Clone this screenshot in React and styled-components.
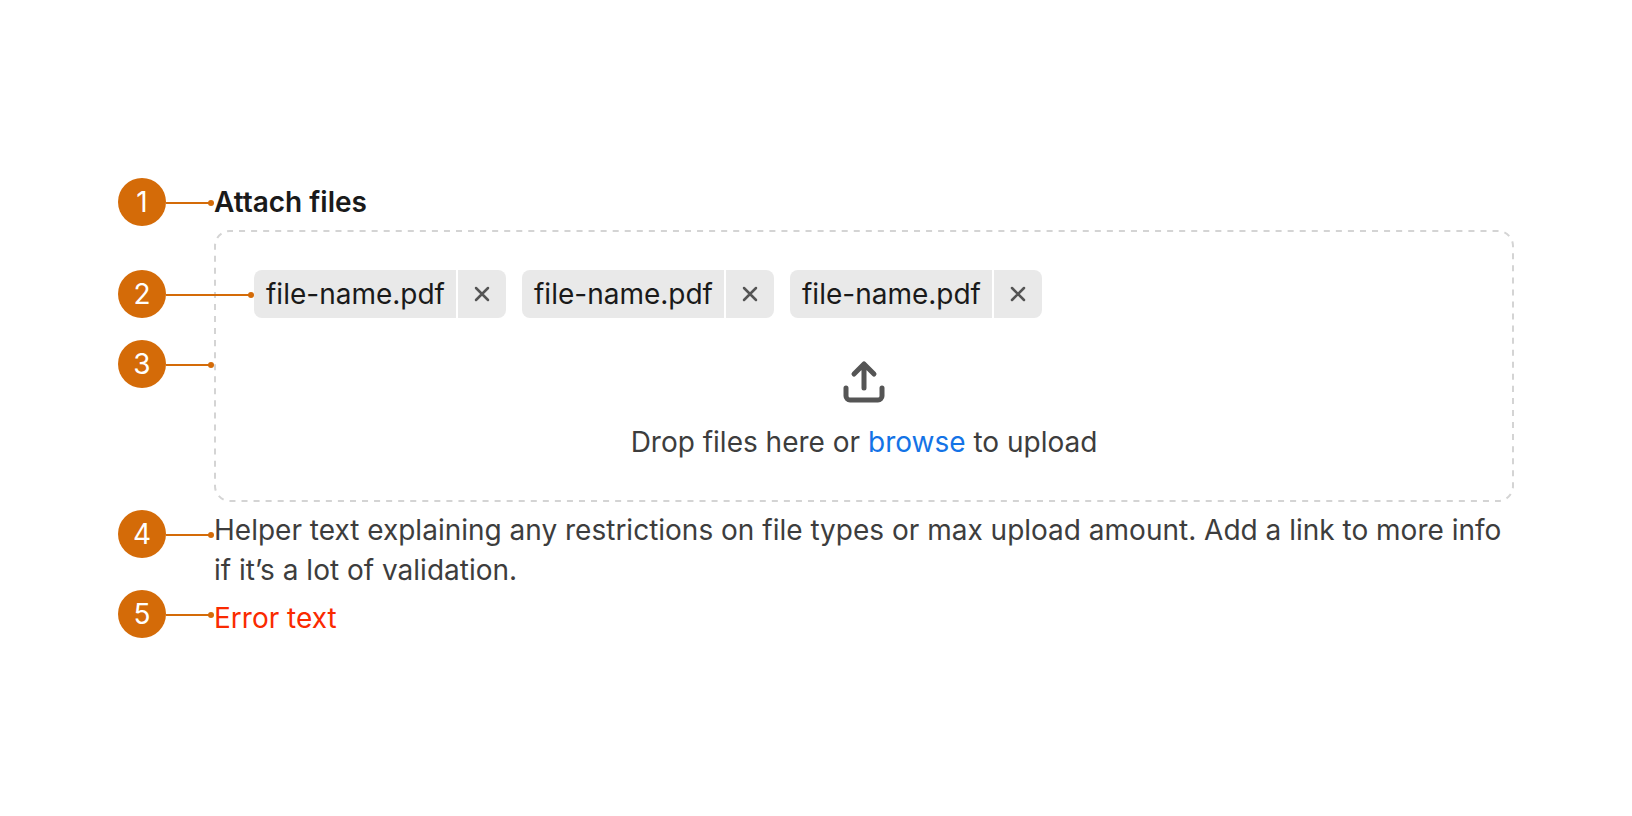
import React, { useRef, useState } from "react";
import styled, { createGlobalStyle } from "styled-components";

const GlobalStyle = createGlobalStyle`
    *,
    *::before,
    *::after {
        box-sizing: border-box;
    }

    body {
        margin: 0;
        background: #fff;
        color: #3d3d3d;
        font-family: Inter, "Liberation Sans", sans-serif;
        font-size: 28px;
        line-height: 40px;
    }
`;

const Page = styled.main`
    padding: 182px 118px 178px 214px;
`;

const Field = styled.section`
    display: flex;
    flex-direction: column;
    gap: 8px;
`;

const Part = styled.div`
    position: relative;
`;

const Label = styled.label`
    display: block;
    color: #1a1a1a;
    font-weight: 600;
`;

const FileInput = styled.input`
    position: absolute;
    width: 1px;
    height: 1px;
    opacity: 0;
    pointer-events: none;
`;

const DropZone = styled.div`
    position: relative;
    display: flex;
    flex-direction: column;
    gap: 40px;
    padding: 40px;
`;

// CSS dashes sit too close together at 2px, so the outline is stroked instead
const Outline = styled.svg`
    position: absolute;
    inset: 1px;
    width: calc(100% - 2px);
    height: calc(100% - 2px);
    overflow: visible;
    color: #d4d4d4;
    pointer-events: none;
`;

const FileList = styled.ul`
    display: flex;
    flex-wrap: wrap;
    gap: 16px;
    margin: 0;
    padding: 0;
    list-style: none;
`;

const FileItem = styled.li`
    position: relative;
    display: flex;
    gap: 2px;
    height: 48px;
`;

const FileName = styled.span`
    width: 202px;
    padding-left: 12px;
    border-radius: 8px 0 0 8px;
    background: #e9e9e9;
    color: #1a1a1a;
    line-height: 48px;
    white-space: nowrap;
`;

const RemoveButton = styled.button`
    display: flex;
    align-items: center;
    justify-content: center;
    width: 48px;
    padding: 0;
    border: 0;
    border-radius: 0 8px 8px 0;
    background: #e9e9e9;
    color: #555;
    cursor: pointer;
`;

const Upload = styled.div`
    display: flex;
    flex-direction: column;
    align-items: center;
    gap: 16px;
    color: #555;
`;

const Prompt = styled.p`
    margin: 0;
    color: #3d3d3d;
`;

const BrowseButton = styled.button`
    padding: 0;
    border: 0;
    background: none;
    color: #1473e6;
    font: inherit;
    cursor: pointer;
`;

const HelperText = styled.p`
    margin: 0;
`;

const ErrorText = styled.p`
    margin: 0;
    color: #fa2a00;
`;

// Numbered callout that hangs in the left margin of the part it points at
const Callout = styled.span`
    position: absolute;
    top: ${({ $top }) => $top}px;
    right: 100%;
    display: flex;
    align-items: center;
`;

const Badge = styled.span`
    width: 48px;
    height: 48px;
    border-radius: 50%;
    background: #d46b08;
    color: #fff;
    line-height: 48px;
    text-align: center;
`;

const Leader = styled.svg`
    display: block;
    color: #d46b08;
`;

function Marker({ number, top = 0, length = 48 }) {
    return (
        <Callout $top={top}>
            <Badge>{number}</Badge>
            <Leader width={length} height="8" aria-hidden="true">
                <path d={`M0 5H${length - 3}`} stroke="currentColor" strokeWidth="2" />
                <circle cx={length - 3} cy="5" r="3" fill="currentColor" />
            </Leader>
        </Callout>
    );
}

function DashedOutline() {
    return (
        <Outline aria-hidden="true">
            <rect
                width="100%"
                height="100%"
                rx="15"
                fill="none"
                stroke="currentColor"
                strokeWidth="2"
                pathLength="3096"
                strokeDasharray="6 6"
                strokeDashoffset="3"
            />
        </Outline>
    );
}

function CloseIcon() {
    return (
        <svg width="16" height="16" viewBox="0 0 16 16" fill="none" aria-hidden="true">
            <path
                d="M2 2l12 12M14 2L2 14"
                stroke="currentColor"
                strokeWidth="2.5"
                strokeLinecap="round"
            />
        </svg>
    );
}

function UploadIcon() {
    return (
        <svg width="48" height="48" viewBox="0 0 48 48" fill="none" aria-hidden="true">
            <path
                d="M6 30v8a4 4 0 0 0 4 4h28a4 4 0 0 0 4-4v-8M24 30V6M14 16L24 6l10 10"
                stroke="currentColor"
                strokeWidth="5"
                strokeLinecap="round"
                strokeLinejoin="round"
            />
        </svg>
    );
}

const initialFiles = [
    { id: 1, name: "file-name.pdf" },
    { id: 2, name: "file-name.pdf" },
    { id: 3, name: "file-name.pdf" },
];

function App() {
    const [files, setFiles] = useState(initialFiles);
    const inputRef = useRef(null);

    const removeFile = (id) => {
        setFiles(files.filter((file) => file.id !== id));
    };

    return (
        <>
            <GlobalStyle />
            <Page>
                <Field>
                    <Part>
                        <Marker number={1} top={-4} />
                        <Label htmlFor="files">Attach files</Label>
                    </Part>
                    <DropZone>
                        <DashedOutline />
                        <Marker number={3} top={110} />
                        <FileInput id="files" type="file" multiple ref={inputRef} />
                        <FileList>
                            {files.map((file, index) => (
                                <FileItem key={file.id}>
                                    {index === 0 && <Marker number={2} length={88} />}
                                    <FileName>{file.name}</FileName>
                                    <RemoveButton
                                        type="button"
                                        aria-label="Remove file"
                                        onClick={() => removeFile(file.id)}
                                    >
                                        <CloseIcon />
                                    </RemoveButton>
                                </FileItem>
                            ))}
                        </FileList>
                        <Upload>
                            <UploadIcon />
                            <Prompt>
                                Drop files here or{" "}
                                <BrowseButton
                                    type="button"
                                    onClick={() => inputRef.current.click()}
                                >
                                    browse
                                </BrowseButton>{" "}
                                to upload
                            </Prompt>
                        </Upload>
                    </DropZone>
                    <Part>
                        <Marker number={4} />
                        <HelperText>
                            Helper text explaining any restrictions on file types or max upload
                            amount. Add a link to more info if it’s a lot of validation.
                        </HelperText>
                    </Part>
                    <Part>
                        <Marker number={5} top={-8} />
                        <ErrorText>Error text</ErrorText>
                    </Part>
                </Field>
            </Page>
        </>
    );
}

export default App;
